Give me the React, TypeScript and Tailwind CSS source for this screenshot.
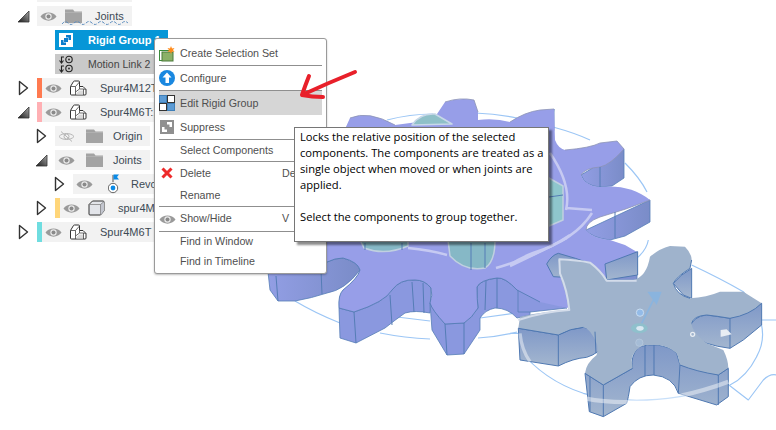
import React from 'react';

const Eye = ({ off = false, className = '' }: { off?: boolean; className?: string }) => (
  <svg className={className} width="17" height="11" viewBox="0 0 17 11">
    {off ? (
      <g fill="none" stroke="#b5b5b5" strokeWidth="1">
        <path d="M1 5.5C4 1.5 13 1.5 16 5.5C13 9.5 4 9.5 1 5.5Z" />
        <circle cx="8.5" cy="5.5" r="2.5" />
        <path d="M3 0.5L14 10.5" />
      </g>
    ) : (
      <g>
        <path d="M0.5 5.5C4 0 13 0 16.5 5.5C13 11 4 11 0.5 5.5Z" fill="#9a9a9a" />
        <circle cx="8.5" cy="5.5" r="3.2" fill="#e9e9e9" />
        <circle cx="8.5" cy="5.5" r="2" fill="#8a8a8a" />
      </g>
    )}
  </svg>
);

const Folder = () => (
  <svg width="17" height="14" viewBox="0 0 17 14">
    <path d="M0 0.5H8L9.5 2.5H17V14H0Z" fill="#a3a3a3" />
    <path d="M0 3.5H17" stroke="#b8b8b8" strokeWidth="0.7" />
  </svg>
);

const Comp = () => (
  <svg width="17" height="16" viewBox="0 0 17 16">
    <path d="M0.5 6.5L3.5 1.5Q3.7 1 4.5 1H8.5Q9.5 1 9.5 2V6.5H13L16 9.5V14Q16 15 15 15H1.5Q0.5 15 0.5 14Z" fill="#fff" stroke="#333" strokeWidth="1" strokeLinejoin="round" />
    <path d="M0.5 6.5H5.5L9.5 2M5.5 6.5V15M5.5 12L9.5 9H13.5V15M9.5 9L9.5 6.5M13.5 9L16 9.5" fill="none" stroke="#444" strokeWidth="0.8" />
    <path d="M6.5 13L9.5 10.5H13V14.5H6.5Z" fill="#d9d9d9" />
  </svg>
);

const Box = () => (
  <svg width="17" height="16" viewBox="0 0 17 16">
    <path d="M1 4.5L4.5 1H15Q16 1 16 2V11L12.5 15H2Q1 15 1 14Z" fill="#e3e5ea" stroke="#333" strokeWidth="1" strokeLinejoin="round" />
    <path d="M12.5 4.5L16 1.5V11L12.5 15Z" fill="#c3c6cf" />
    <path d="M1 4.5H12.5V15M12.5 4.5L16 1.5" fill="none" stroke="#777" strokeWidth="0.7" />
  </svg>
);

const Flag = () => (
  <svg width="12" height="21" viewBox="0 0 12 21">
    <path d="M5 1V8" stroke="#555" strokeWidth="1" />
    <path d="M5.5 0.5H11L9 3L11 5.5H5.5Z" fill="#0a8ae6" />
    <circle cx="5" cy="14" r="4.7" fill="#fff" stroke="#666" strokeWidth="1" />
    <circle cx="5" cy="14" r="2.4" fill="#0a8ae6" />
  </svg>
);

const Tri = ({ open }: { open: boolean }) => (
  <svg className="shrink-0" width="20" height="16" viewBox="0 0 20 16">
    {open ? (
      <path d="M2.5 1.5V14.5L10.5 8Z" fill="#fff" stroke="#333" strokeWidth="1.4" strokeLinejoin="round" />
    ) : (
      <g>
        <defs>
          <linearGradient id="tri" x1="0" y1="1" x2="1" y2="0">
            <stop offset="0" stopColor="#1b1b1b" />
            <stop offset="1" stopColor="#a8a8a8" />
          </linearGradient>
        </defs>
        <path d="M1 14L12 3V14Z" fill="url(#tri)" stroke="#333" strokeWidth="0.8" />
      </g>
    )}
  </svg>
);

const RigidIcon = () => (
  <svg width="14" height="14" viewBox="0 0 14 14">
    <rect x="0" y="0" width="14" height="14" fill="#fff" />
    <path d="M7 2H12V7H9.5V4.5H7ZM2 7H4.5V9.5H7V12H2Z" fill="#0b7dcc" />
    <path d="M5 5H9V9H5Z" fill="#0b7dcc" />
  </svg>
);

const MotionIcon = () => (
  <svg width="16" height="20" viewBox="0 0 16 20">
    <g fill="none" stroke="#222" strokeWidth="1.1">
      <circle cx="11" cy="5.5" r="3.2" />
      <circle cx="11" cy="14.5" r="3.2" />
      <path d="M6 3H3.5V8M6 12H3.5V17" />
      <path d="M1.5 6.5L3.5 9L5.5 6.5M1.5 15.5L3.5 18L5.5 15.5" />
    </g>
    <circle cx="11" cy="5.5" r="0.9" fill="#222" />
    <circle cx="11" cy="14.5" r="0.9" fill="#222" />
  </svg>
);

type RowDef = {
  w: string;
  ml: string;
  open?: boolean;
  stripe?: string;
  eyeOff?: boolean;
  icon: React.ReactNode;
  label: string;
  iconCls: string;
  textCls: string;
};

const rows: RowDef[] = [
  { w: 'w-[95px]', ml: 'ml-[17px]', open: false, icon: <Folder />, label: 'Joints', iconCls: 'ml-[8px]', textCls: 'ml-[13px]' },
  { w: 'w-[130px]', ml: 'ml-[17px]', open: true, stripe: 'bg-[#ff7a50]', icon: <Comp />, label: 'Spur4M12T', iconCls: 'ml-[8px]', textCls: 'ml-[13px]' },
  { w: 'w-[130px]', ml: 'ml-[17px]', open: false, stripe: 'bg-[#ffb0b4]', icon: <Comp />, label: 'Spur4M6T:1', iconCls: 'ml-[8px]', textCls: 'ml-[13px]' },
  { w: 'w-[95px]', ml: 'ml-[35px]', open: true, eyeOff: true, icon: <Folder />, label: 'Origin', iconCls: 'ml-[11px]', textCls: 'ml-[10px]' },
  { w: 'w-[95px]', ml: 'ml-[35px]', open: false, icon: <Folder />, label: 'Joints', iconCls: 'ml-[11px]', textCls: 'ml-[10px]' },
  { w: 'w-[100px]', ml: 'ml-[53px]', open: true, icon: <Flag />, label: 'Revolute', iconCls: 'ml-[15px]', textCls: 'ml-[11px]' },
  { w: 'w-[112px]', ml: 'ml-[35px]', open: true, stripe: 'bg-[#ffd67a]', icon: <Box />, label: 'spur4M6T', iconCls: 'ml-[8px]', textCls: 'ml-[13px]' },
  { w: 'w-[130px]', ml: 'ml-[17px]', open: true, stripe: 'bg-[#6fdde0]', icon: <Comp />, label: 'Spur4M6T (1)', iconCls: 'ml-[8px]', textCls: 'ml-[13px]' },
];

function TreeRow({ r }: { r: RowDef }) {
  return (
    <div className={`flex items-center h-5 ${r.ml}`}>
      <Tri open={!!r.open} />
      <div className={`flex items-center h-5 bg-[#f2f2f2] overflow-hidden whitespace-nowrap ${r.w}`}>
        {r.stripe ? <div className={`w-[5px] h-5 shrink-0 mr-[3px] ${r.stripe}`} /> : <div className="w-[3px] shrink-0" />}
        <Eye off={r.eyeOff} className="shrink-0" />
        <div className={`shrink-0 ${r.iconCls}`}>{r.icon}</div>
        <span className={`text-[11px] text-[#3c4a55] ${r.textCls}`}>{r.label}</span>
      </div>
    </div>
  );
}

const Sep = () => <div className="h-px bg-[#8f8f8f] mx-1" />;

function MenuItem({ h, icon, label, shortcut, active, high }: { h: string; icon?: React.ReactNode; label: string; shortcut?: string; active?: boolean; high?: boolean }) {
  return (
    <div className={`flex items-center mx-1 ${h} ${active ? 'bg-[#d6d6d6]' : ''}`}>
      <div className="w-[21px] shrink-0 flex justify-start">{icon}</div>
      <span className={`text-[10.7px] text-[#4f4f4f] whitespace-nowrap ${high ? 'pb-[2px]' : ''}`}>{label}</span>
      {shortcut && <span className={`absolute left-[127px] text-[10.7px] text-[#4f4f4f] ${high ? 'pb-[2px]' : ''}`}>{shortcut}</span>}
    </div>
  );
}

function BigGear() {
  const edge = '#557db6';
  return (
    <g strokeLinejoin="round">
      {/* ground rings */}
      <g fill="none" stroke="#9cc6f5" strokeWidth="1.2">
        <path d="M295 301Q315 313 340 323M380 333Q405 338 430 339M478 338Q498 337 517 332" />
        <path d="M397 317L430 321M480 318L517 313" />
        <path d="M387 120Q410 114 433 114M475 113Q497 114 517 118M553 127Q575 133 590 140M625 163Q640 178 647 192" />
      </g>
      {/* side walls */}
      <path d="M268 272L270 290L278 301H295Q312 298 327 293Q345 290 360 270Q358 262 343 258Q335 258 327 262Z" fill="url(#wallA)" stroke={edge} strokeWidth="0.8" />
      <path d="M339 308L354 312Q385 302 392 290Q400 279 415 280Q425 280 431 288L430 313Q415 310 405 313Q395 320 385 328L356 343L340 338Z" fill="#8a98df" stroke={edge} strokeWidth="0.8" />
      <path d="M430 303L445 324L464 323Q472 318 478 308Q477 300 477 287Q480 280 497 278Q505 277 517 290L530 297V315L517 318Q508 308 495 308Q485 310 480 318V330L464 354L447 355L432 330Z" fill="#8a98df" stroke={edge} strokeWidth="0.8" />
      <path d="M554 109V130L548 145Z" fill="#7f90cf" stroke={edge} strokeWidth="0.8" />
      <path d="M581 175Q585 186 600 187L612 186L624 178V149Z" fill="url(#wallA)" stroke={edge} strokeWidth="0.8" />
      <path d="M586 230Q592 238 610 240L625 236L650 222V200Z" fill="url(#wallA)" stroke={edge} strokeWidth="0.8" />
      <path d="M637 252V280H605V262Z" fill="#7f90cf" stroke={edge} strokeWidth="0.8" />
      <path d="M518 290V312H530L567 308Z" fill="#8a98df" stroke={edge} strokeWidth="0.8" />
      {/* top face */}
      <path
        d="M268 272L300 200L340 140L350 118Q368 110 395 125L433 120L445 102Q460 97 474 100L478 112V120Q495 118 510 122Q525 112 540 110L554 109L555 140Q558 148 565 150Q590 148 600 143L617 141L624 149Q610 165 600 167Q585 168 581 175Q585 186 600 187Q630 184 650 200Q625 210 600 217Q586 222 586 230Q592 238 610 240L625 245L637 252L612 265L605 280L567 308L540 302L517 290Q505 277 497 278Q480 280 477 287Q477 300 478 308Q472 318 464 323L445 324Q432 310 430 303Q433 295 431 288Q425 280 415 280Q400 279 392 290Q385 302 354 312L339 308Q338 295 343 290Q358 278 360 270Q358 262 343 258Q335 258 327 262Q310 270 300 272Z"
        fill="#979ee8"
      />
      <path d="M268 272L300 272Q310 270 327 262Q335 258 343 258Q358 262 360 270Q358 278 343 290Q338 295 339 308L354 312Q385 302 392 290Q400 279 415 280Q425 280 431 288Q433 295 430 303Q432 310 445 324L464 323Q472 318 478 308Q477 300 477 287Q480 280 497 278Q505 277 517 290L540 302" fill="none" stroke={edge} strokeWidth="0.9" />
      <path d="M350 118Q368 110 395 125M445 102Q460 97 474 100L478 112M510 122Q525 112 540 110L554 109M565 150Q590 148 600 143L617 141L624 149Q610 165 600 167Q585 168 581 175M650 200Q625 210 600 217Q586 222 586 230" fill="none" stroke="#8b93b5" strokeWidth="0.8" />
      {/* light bands on the face */}
      <g fill="none" stroke="#c6caf2" strokeWidth="2.5">
        <path d="M550 153Q572 185 566 210M566 208L592 210M592 213Q575 240 533 253Q520 258 510 265" />
        <path d="M408 248Q430 250 447 255M496 268Q540 255 570 235" />
        <path d="M510 266Q540 252 567 238" />
      </g>
      {/* teal hubs */}
      <path d="M412 125Q420 113 435 114L452 124Z" fill="#8fc0c8" stroke="#c8d8e8" strokeWidth="1.5" />
      <path d="M360 240L364 248Q385 256 408 246V240Z" fill="#86b8c6" stroke="#c0d0e0" strokeWidth="1.5" />
      <path d="M448 240L450 256Q465 272 485 268Q495 262 495 240Z" fill="#86b8c6" stroke="#c0d0e0" strokeWidth="1.5" />
      <path d="M549 178L563 186V220L549 226Z" fill="#8ec6cc" stroke="#c0d0e0" strokeWidth="1.5" />
      <g stroke={edge} strokeWidth="1" fill="none">
        <path d="M471 270V243M485 268V243M402 250V243M365 250V243" />
        <path d="M549 197L563 195" />
        <path d="M276 276L278 301M321 270L322 294" />
        <path d="M354 312L356 343M390 295L392 325M412 282L414 312M423 283L424 313" />
        <path d="M445 324L447 355M464 323V354M486 281L485 310M497 278V308" />
        <path d="M600 167V187M615 212V238" />
      </g>
    </g>
  );
}

function SmallGear() {
  const edge = '#4f78b2';
  return (
    <g transform="translate(510 240) scale(0.3333)" strokeLinejoin="round">
      {/* orbit lines */}
      <g fill="none" stroke="#9cc6f5" strokeWidth="3.5">
        <path d="M30 330Q100 420 220 460Q400 510 640 440" />
        <path d="M545 75Q630 115 700 155Q790 260 740 350Q710 410 660 435" />
        <path d="M650 430L715 480L760 420Q780 400 800 405M755 240H800M415 0Q410 30 380 55M0 280H25" />
      </g>
      {/* walls */}
      <path d="M110 72Q125 45 145 40Q200 55 240 70L290 120L130 110Z" fill="url(#wallB)" stroke={edge} strokeWidth="3" />
      <path d="M285 72L383 35V105L290 120Z" fill="url(#wallB)" stroke={edge} strokeWidth="3" />
      <path d="M172 128Q230 135 248 165Q235 205 178 212Z" fill="url(#wallB)" stroke={edge} strokeWidth="3" />
      <path d="M490 130Q510 105 545 85V175L520 165Z" fill="url(#wallB)" stroke={edge} strokeWidth="3" />
      <path d="M660 235L755 190V255L700 300L660 325Q620 320 590 310Q545 290 538 265Q550 228 590 225Z" fill="url(#wallB)" stroke={edge} strokeWidth="3" />
      <path d="M25 265L145 285Q180 265 220 262Q270 270 287 305Q270 340 230 352Q190 355 145 378L30 360Z" fill="url(#wallB)" stroke={edge} strokeWidth="3" />
      <path d="M225 400L280 435L368 385Q360 350 385 322Q410 312 440 315Q480 320 500 340L510 375L625 405L655 385V470L620 495L505 460Q490 410 430 405Q385 405 360 440Q355 475 350 490L280 530L238 515Z" fill="url(#wallB)" stroke={edge} strokeWidth="3" />
      {/* top face */}
      <path
        d="M420 50Q450 25 480 18L525 20Q545 40 545 60L540 85Q500 110 490 130Q500 165 540 175Q590 172 630 155H700L755 190Q720 225 660 235Q620 228 590 225Q550 228 545 250Q545 275 590 310L640 330Q655 360 655 385L625 405Q560 395 510 375Q505 350 500 340Q470 315 440 315H405Q370 325 365 360L368 385L280 435L225 400Q228 370 260 345Q265 325 260 310Q240 265 220 262Q180 265 145 285L25 265L30 230Q100 215 175 210Q170 160 155 125L145 60Q200 60 240 70Q270 90 290 120H370Q410 110 420 50Z"
        fill="#9fb3cc"
      />
      <path d="M660 235Q720 225 755 190M510 375Q560 395 625 405L655 385M225 400L280 435L368 385M25 265L145 285Q180 265 220 262M545 60L540 85Q500 110 490 130Q500 165 540 175M660 235Q620 228 590 225Q550 228 545 250" fill="none" stroke={edge} strokeWidth="3" />
      <path d="M25 240Q100 215 178 210Q172 150 150 100L148 58Q200 60 240 68Q272 92 290 122H380" fill="none" stroke="#d3dcea" strokeWidth="6" />
      <g stroke={edge} strokeWidth="3" fill="none">
        <path d="M145 285V378M255 275L258 340" />
        <path d="M280 435V530M240 410V515" />
        <path d="M405 318V408M432 315V406" />
        <path d="M510 375L505 460M625 405V495" />
        <path d="M660 235V325" />
      </g>
      {/* ghost band */}
      <path d="M225 475Q350 500 500 470Q590 450 655 425" fill="none" stroke="#fff" strokeOpacity="0.45" strokeWidth="13" />
      <path d="M30 280Q35 330 60 365" fill="none" stroke="#fff" strokeOpacity="0.45" strokeWidth="10" />
      {/* joint glyph */}
      <g>
        <path d="M395 250L438 165" stroke="#8ab4de" strokeWidth="5" fill="none" />
        <path d="M412 155H455L440 195Z" fill="#8ab4de" />
        <circle cx="390" cy="218" r="11" fill="#93bbe8" stroke="#c8dcf0" strokeWidth="3" />
        <ellipse cx="388" cy="265" rx="25" ry="15" fill="#8fc0cc" />
        <ellipse cx="390" cy="265" rx="11" ry="7" fill="#d9e8f2" />
        <circle cx="388" cy="308" r="11" fill="#a5bcd6" stroke="#b9cce0" strokeWidth="2" />
        <path d="M632 290V270L650 268L665 283L635 290Z" fill="#e8edf3" />
        <circle cx="548" cy="283" r="6" fill="none" stroke="#e8edf3" strokeWidth="4" />
      </g>
    </g>
  );
}

export default function App() {
  return (
    <div className="relative w-[776px] h-[430px] bg-white overflow-hidden font-['Liberation_Sans',sans-serif]">
      {/* 3d viewport */}
      <svg className="absolute inset-0" width="776" height="430" viewBox="0 0 776 430">
        <defs>
          <linearGradient id="wallA" x1="0" y1="0" x2="1" y2="0">
            <stop offset="0" stopColor="#929ee4" />
            <stop offset="1" stopColor="#7a8cc8" />
          </linearGradient>
          <linearGradient id="wallB" x1="0" y1="0" x2="0" y2="1">
            <stop offset="0" stopColor="#7f98c8" />
            <stop offset="1" stopColor="#a3b6cf" />
          </linearGradient>
        </defs>
        <BigGear />
        <SmallGear />
      </svg>

      {/* browser tree */}
      <div className="relative">
        <div className="ml-[37px] w-[95px] h-[2px] bg-[#f2f2f2]" />
        <div className="relative mt-1">
          <TreeRow r={rows[0]} />
          {/* squiggle under the joints row */}
          <svg className="absolute left-[62px] top-[14px]" width="70" height="5" viewBox="0 0 70 5">
            <path d="M0 4Q3 0 6 3T12 3T18 3T24 3T30 3T36 3T42 3T48 3T54 3T60 3T66 3" fill="none" stroke="#5f8fc0" strokeWidth="1" strokeDasharray="3 1.5" />
          </svg>
        </div>
        <div className="ml-[55px] mt-1 w-[113px] h-5 bg-[#0696d7] flex items-center">
          <div className="ml-[4px]">
            <RigidIcon />
          </div>
          <span className="ml-[15px] text-[11px] font-bold text-white whitespace-nowrap">Rigid Group 1</span>
        </div>
        <div className="ml-[55px] mt-1 w-[113px] h-5 bg-[#c9c9c9] flex items-center">
          <div className="ml-[3px]">
            <MotionIcon />
          </div>
          <span className="ml-[14px] pt-[2px] text-[10.5px] text-[#444] whitespace-nowrap">Motion Link 2</span>
        </div>
        <div className="flex flex-col gap-1 mt-1">
          {rows.slice(1).map((r, i) => (
            <TreeRow key={i} r={r} />
          ))}
        </div>
      </div>

      {/* context menu */}
      <div className="absolute left-[154px] top-[38px] w-[173px] h-[236px] bg-white border border-[#9a9a9a] rounded-[3px] pt-[3px] shadow-[0_1px_2px_rgba(0,0,0,0.25)]">
        <MenuItem
          h="h-[23px]"
          label="Create Selection Set"
          icon={
            <svg width="16" height="16" viewBox="0 0 16 16">
              <rect x="0.5" y="4.5" width="11" height="10" fill="#fff" stroke="#3a8a3a" />
              <rect x="3" y="6" width="11" height="9" fill="#8bb068" stroke="#4a7a3a" />
              <path d="M12 0L13 2.5L15.5 2L14 4L15.5 6L13 5.5L12 8L11 5.5L8.5 6L10 4L8.5 2L11 2.5Z" fill="#ff8a1a" />
            </svg>
          }
        />
        <Sep />
        <MenuItem
          h="h-[24px]"
          label="Configure"
          icon={
            <svg width="16" height="16" viewBox="0 0 16 16">
              <circle cx="8" cy="8" r="8" fill="#1a88e0" />
              <path d="M8 2.5L12.5 7.5H10V13H6.5V7.5H3.5Z" fill="#fff" />
            </svg>
          }
        />
        <Sep />
        <MenuItem
          h="h-[24px]"
          label="Edit Rigid Group"
          active
          icon={
            <svg width="16" height="16" viewBox="0 0 16 16">
              <rect x="0.5" y="0.5" width="7" height="7" fill="#5b9bd5" stroke="#3f7fb8" />
              <rect x="8.5" y="0.5" width="7" height="7" fill="#fff" stroke="#333" />
              <rect x="0.5" y="8.5" width="7" height="7" fill="#fff" stroke="#333" />
              <rect x="8.5" y="8.5" width="7" height="7" fill="#5b9bd5" stroke="#3f7fb8" />
            </svg>
          }
        />
        <MenuItem
          h="h-[24px]"
          label="Suppress"
          icon={
            <svg className="ml-px" width="14" height="14" viewBox="0 0 14 14">
              <rect width="14" height="14" fill="#8f8f8f" />
              <path d="M7 2H12V7H9.5V4.5H7ZM2 7H4.5V9.5H7V12H2Z" fill="#fff" />
            </svg>
          }
        />
        <Sep />
        <MenuItem h="h-[21px]" label="Select Components" />
        <Sep />
        <MenuItem
          h="h-[22px]"
          label="Delete"
          shortcut="Del"
          icon={
            <svg className="ml-[2px]" width="12" height="12" viewBox="0 0 12 12">
              <path d="M1.5 1.5L10.5 10.5M10.5 1.5L1.5 10.5" stroke="#ee2b2b" strokeWidth="3" />
            </svg>
          }
        />
        <MenuItem h="h-[22px]" label="Rename" />
        <Sep />
        <MenuItem h="h-[24px]" label="Show/Hide" shortcut="V" high icon={<Eye />} />
        <Sep />
        <MenuItem h="h-[20px]" label="Find in Window" high />
        <MenuItem h="h-[20px]" label="Find in Timeline" high />
      </div>

      {/* tooltip */}
      <div className="absolute left-[294px] top-[127px] w-[255px] h-[115px] bg-white border border-[#767676] shadow-[3px_3px_2px_rgba(0,0,0,0.45)] pl-[5px] pt-[1px] text-[11.2px] leading-4 text-black whitespace-nowrap font-['Open_Sans',sans-serif]">
        <p>Locks the relative position of the selected</p>
        <p>components. The components are treated as a</p>
        <p>single object when moved or when joints are</p>
        <p>applied.</p>
        <p className="mt-4">Select the components to group together.</p>
      </div>

      {/* annotation arrow */}
      <svg className="absolute inset-0 pointer-events-none" width="776" height="430" viewBox="0 0 776 430">
        <path d="M355 72Q328 83 302 95M309 76Q305 86 302 95Q312 97 323 97" fill="none" stroke="#e8202a" strokeWidth="4" strokeLinecap="round" strokeLinejoin="round" />
      </svg>
    </div>
  );
}
